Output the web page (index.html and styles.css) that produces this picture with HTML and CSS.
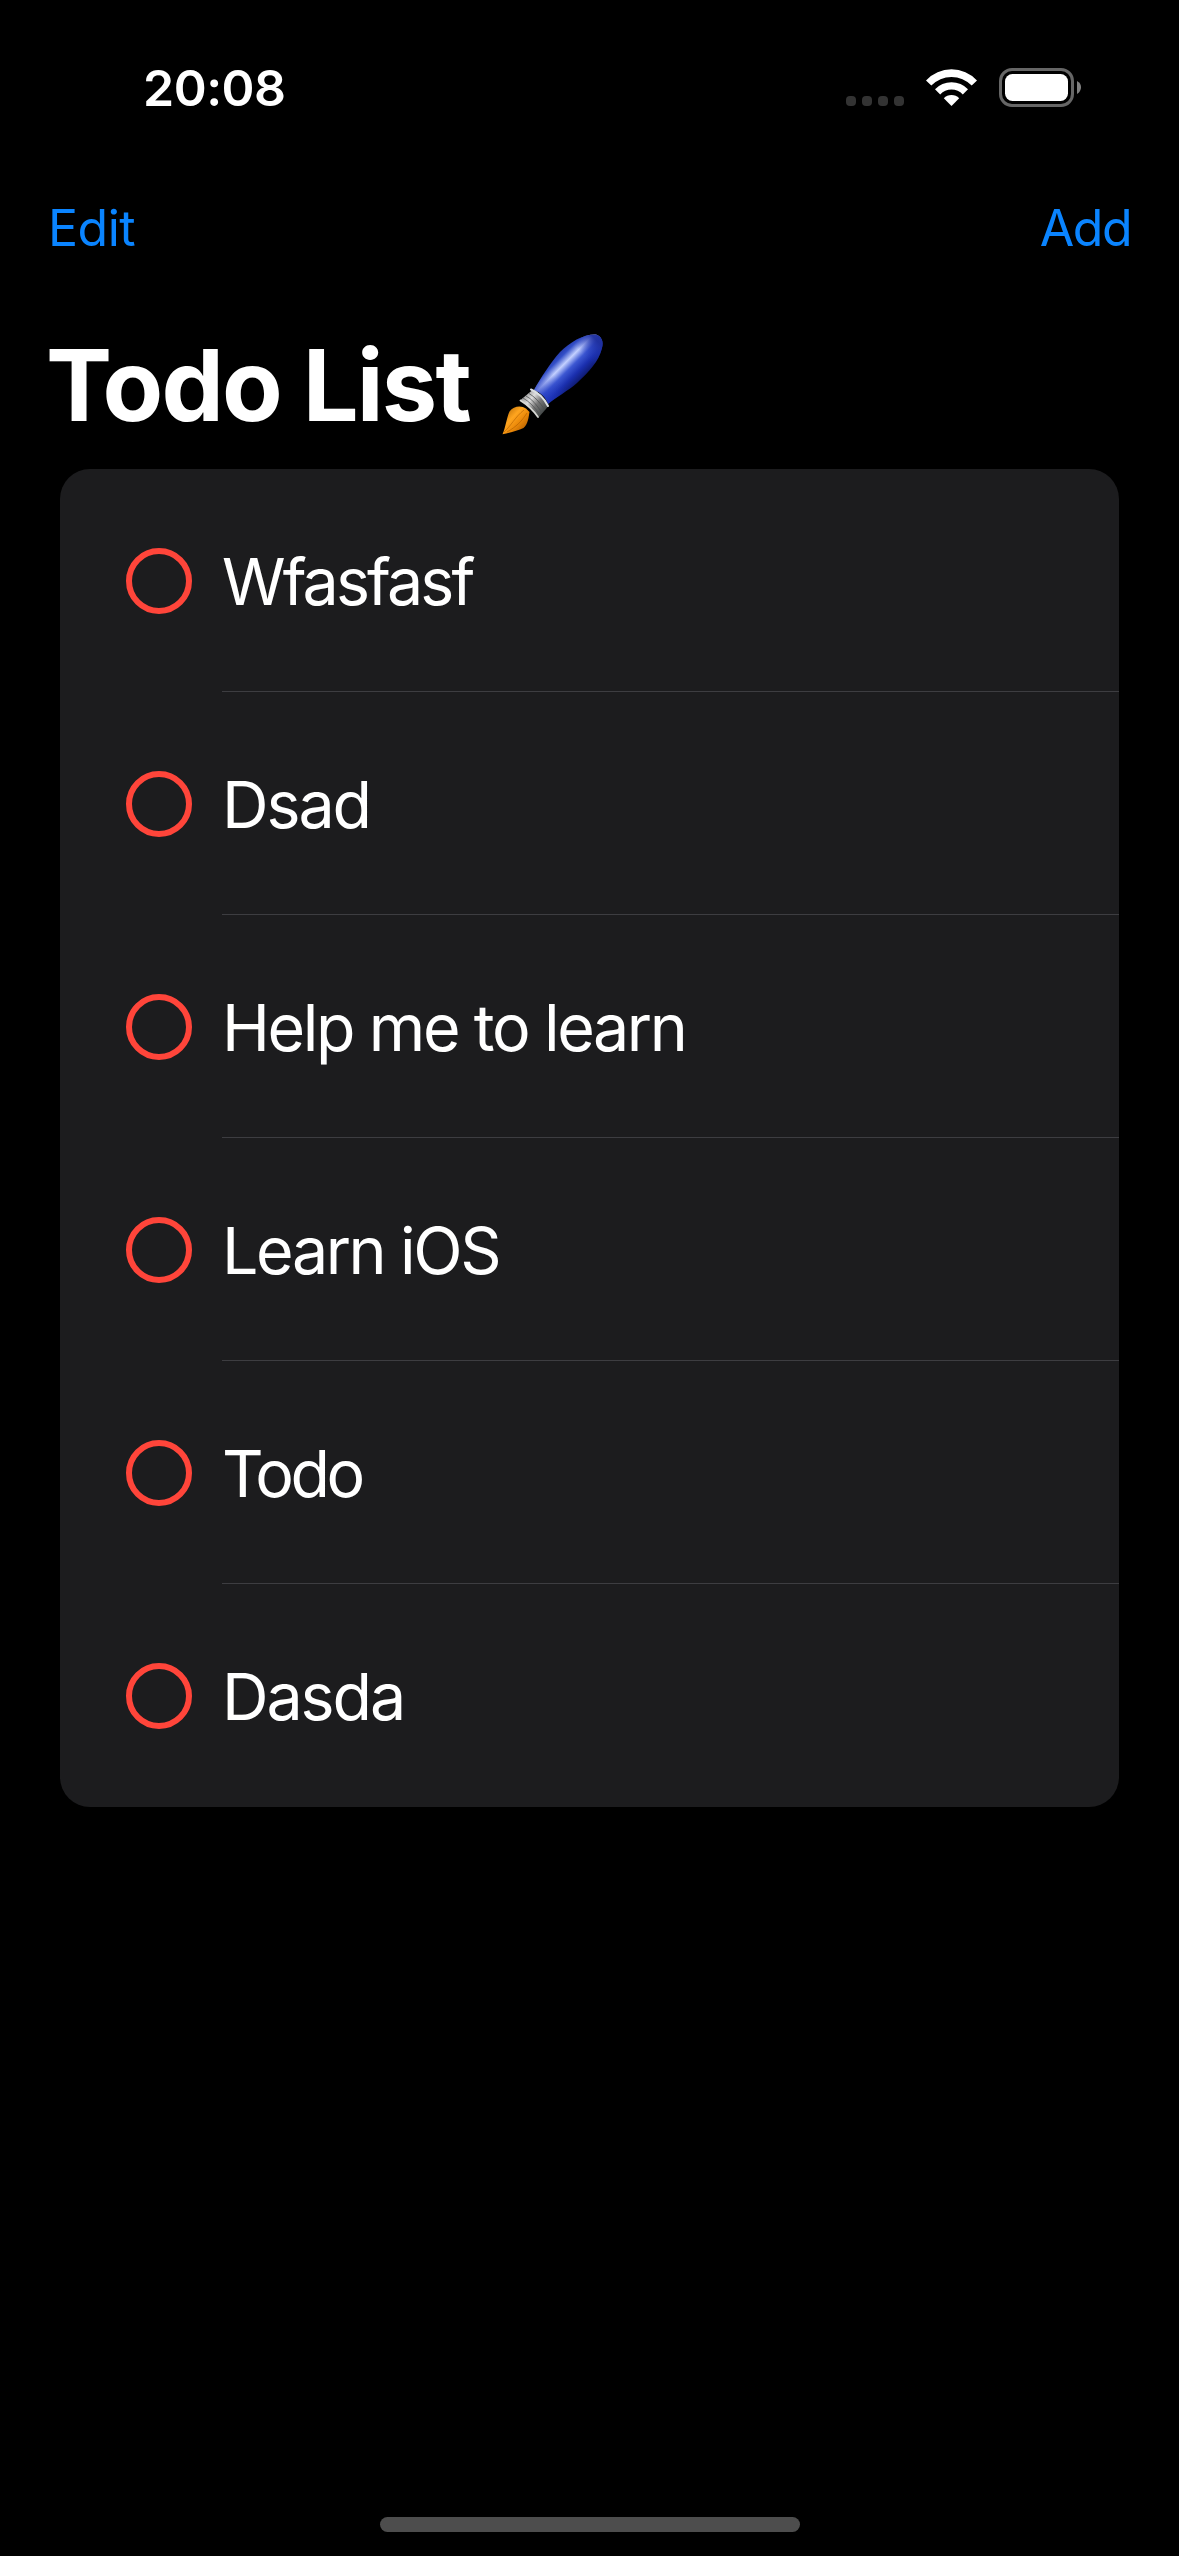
FILE: index.html
```html
<!DOCTYPE html>
<html lang="en">
<head>
<meta charset="utf-8">
<title>Todo List</title>
<link rel="stylesheet" href="styles.css">
</head>
<body>
<div class="screen">
  <header class="status">
    <span class="time">20:08</span>
    <div class="indicators">
      <div class="cellular"><i class="dot"></i><i class="dot"></i><i class="dot"></i><i class="dot"></i></div>
      <svg class="wifi" viewBox="0 0 51 37" fill="#fff">
        <path d="M0 11.4A35 35 0 0 1 51 11.4L45.7 16.6A28 28 0 0 0 5.3 16.6Z"/>
        <path d="M9 20.3A22.6 22.6 0 0 1 42 20.3L36.8 25.5A15.4 15.4 0 0 0 14.2 25.5Z"/>
        <path d="M17.8 29.2A10.8 10.8 0 0 1 33.2 29.2L25.5 37Z"/>
      </svg>
      <svg class="battery" viewBox="0 0 82 39">
        <rect x="1.5" y="1.5" width="72" height="36" rx="11.5" fill="none" stroke="#666" stroke-width="3"/>
        <rect x="6" y="6" width="63" height="27" rx="7.5" fill="#fff"/>
        <path d="M78 13Q82 15 82 19.3T78 26Z" fill="#808080"/>
      </svg>
    </div>
  </header>
  <nav class="navbar">
    <a class="action edit">Edit</a>
    <a class="action add">Add</a>
  </nav>
  <div class="heading">
    <h1 class="title">Todo List</h1>
    <svg class="brush" viewBox="0 0 130 130" role="img" aria-label="Paintbrush">
      <defs>
        <linearGradient id="handle" gradientUnits="userSpaceOnUse" x1="64" y1="34" x2="92" y2="62">
          <stop offset="0" stop-color="#1c2f9c"/>
          <stop offset=".18" stop-color="#3450c8"/>
          <stop offset=".36" stop-color="#c3d0ff"/>
          <stop offset=".54" stop-color="#3c57d2"/>
          <stop offset=".74" stop-color="#1a2fae"/>
          <stop offset="1" stop-color="#0b145e"/>
        </linearGradient>
        <linearGradient id="shade" gradientUnits="userSpaceOnUse" x1="48" y1="76" x2="112" y2="16">
          <stop offset="0" stop-color="#2038c0" stop-opacity=".65"/>
          <stop offset=".3" stop-color="#2038c0" stop-opacity="0"/>
          <stop offset=".7" stop-color="#2038c0" stop-opacity="0"/>
          <stop offset=".92" stop-color="#1e2f9e" stop-opacity=".95"/>
        </linearGradient>
        <linearGradient id="ferrule" gradientUnits="userSpaceOnUse" x1="34" y1="75" x2="54" y2="92">
          <stop offset="0" stop-color="#999"/>
          <stop offset=".3" stop-color="#ddd"/>
          <stop offset=".6" stop-color="#777"/>
          <stop offset="1" stop-color="#424746"/>
        </linearGradient>
        <linearGradient id="bristle" gradientUnits="userSpaceOnUse" x1="17" y1="90" x2="36" y2="108">
          <stop offset="0" stop-color="#c77609"/>
          <stop offset=".35" stop-color="#ffa51f"/>
          <stop offset=".65" stop-color="#ec8a0a"/>
          <stop offset="1" stop-color="#bc6500"/>
        </linearGradient>
      </defs>
      <path d="M12.5 114.3C15.5 108 16.5 98 19.5 91.5C23.5 86 31 85 36 88.5L39.5 92C38.5 98 38 104 33.5 108C27.5 111 19.5 112.5 12.5 114.3Z" fill="url(#bristle)"/>
      <path d="M14 112C21 106 25 97 34 90M17 112C26 107 32 101 37 93" fill="none" stroke="#a95a00" stroke-opacity=".55"/>
      <path d="M42.5 70Q50 72 58.5 86L49 97Q39 87 30.5 80Z" fill="url(#ferrule)"/>
      <path d="M39 73.5Q47 78 55 90M36 76Q44 80 52 93M33 78Q42 83 50 95" fill="none" stroke="#4c4f50" stroke-opacity=".75"/>
      <path d="M30.5 80.5Q41 87 48 97" fill="none" stroke="#d8d9d5" stroke-width="1.8" stroke-linecap="round"/>
      <path d="M44 70C51 58 60 43 70 32C80 22 94 14 106 14.5C111 16 114 21 112 28C109 41 99 52 87 63C78 71 66 77 58 84C56 77 50 72 44 70Z" fill="url(#handle)"/>
      <path d="M44 70C51 58 60 43 70 32C80 22 94 14 106 14.5C111 16 114 21 112 28C109 41 99 52 87 63C78 71 66 77 58 84C56 77 50 72 44 70Z" fill="url(#shade)"/>
      <path d="M41 69.5Q52 74 58 86" fill="none" stroke="#dce0e3" stroke-width="2" stroke-linecap="round"/>
    </svg>
  </div>
  <ul class="list">
    <li class="row"><span class="check"></span><span class="label label-tight">Wfasfasf</span></li>
    <li class="row"><span class="check"></span><span class="label label-loose">Dsad</span></li>
    <li class="row"><span class="check"></span><span class="label">Help me to learn</span></li>
    <li class="row"><span class="check"></span><span class="label">Learn iOS</span></li>
    <li class="row"><span class="check"></span><span class="label label-tighter">Todo</span></li>
    <li class="row"><span class="check"></span><span class="label label-loose">Dasda</span></li>
  </ul>
  <div class="home-indicator"></div>
</div>
</body>
</html>
```
FILE: styles.css
```css
* { box-sizing: border-box; }

body {
  margin: 0;
  background: #000;
  color: #fff;
  font-family: Inter, "Liberation Sans", sans-serif;
}

.screen {
  width: 1179px;
  height: 2556px;
  display: flex;
  flex-direction: column;
  overflow: hidden;
}

.status {
  height: 176px;
  padding: 58px 98px 0 143px;
  display: flex;
  justify-content: space-between;
  align-items: flex-start;
}

.time {
  font-size: 50px;
  line-height: 60px;
  font-weight: 600;
  letter-spacing: -0.5px;
}

.indicators {
  display: flex;
  align-items: flex-start;
  padding-top: 10px;
}

.cellular {
  display: flex;
  gap: 6px;
  margin: 28px 22px 0 0;
}

.dot {
  width: 10px;
  height: 10px;
  border-radius: 4px;
  background: #333;
}

.wifi {
  width: 51px;
  height: 37px;
  margin: 1px 22px 0 0;
}

.battery {
  width: 82px;
  height: 39px;
}

.navbar {
  height: 144px;
  padding: 22px 48px 0;
  display: flex;
  justify-content: space-between;
}

.action {
  color: #0a84ff;
  font-size: 50px;
  line-height: 60px;
}

.edit { letter-spacing: -0.5px; }

.add { letter-spacing: -1.5px; }

.heading {
  height: 149px;
  padding-left: 46px;
  display: flex;
}

.title {
  width: 444px;
  margin: 0;
  padding-top: 5px;
  font-size: 99px;
  line-height: 120px;
  font-weight: 700;
  letter-spacing: -1.8px;
  white-space: nowrap;
}

.brush {
  width: 130px;
  height: 130px;
}

.list {
  list-style: none;
  margin: 0 60px;
  padding: 0;
  background: #1c1c1e;
  border-radius: 30px;
  overflow: hidden;
}

.row {
  height: 223px;
  padding-left: 66px;
  display: flex;
  align-items: center;
}

.check {
  width: 66px;
  height: 66px;
  border: 6px solid #ff453a;
  border-radius: 50%;
}

.label {
  flex: 1;
  height: 223px;
  margin-left: 30px;
  border-bottom: 1px solid #3d3d41;
  font-size: 64.5px;
  line-height: 227px;
  letter-spacing: -2.4px;
}

.label-loose { letter-spacing: -2.1px; }

.label-tight { letter-spacing: -2.9px; }

.label-tighter { letter-spacing: -3.4px; }

.row:last-child .label { border-bottom: 0; }

.home-indicator {
  width: 420px;
  height: 15px;
  margin: auto auto 24px 380px;
  border-radius: 8px;
  background: #4d4d4d;
}
```
